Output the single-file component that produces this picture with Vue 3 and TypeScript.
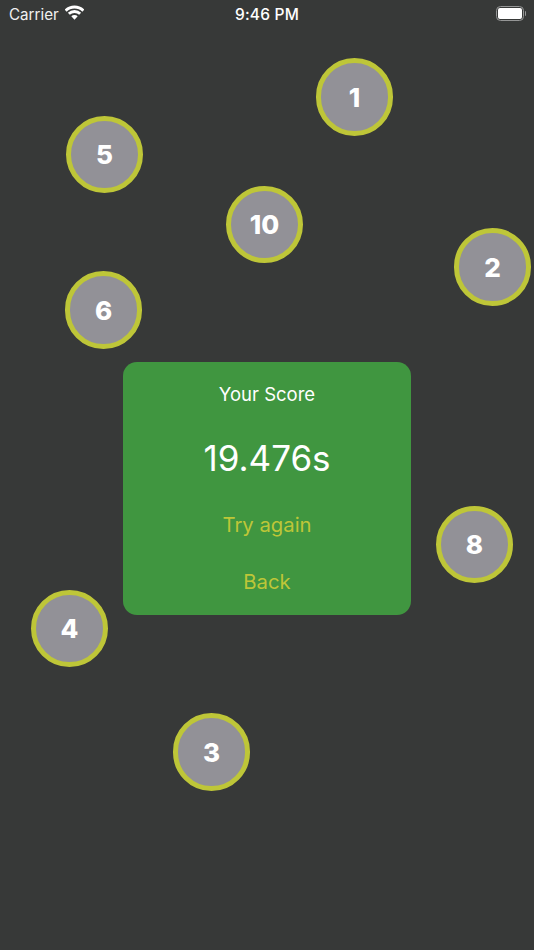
<script setup lang="ts">
interface Node { n: number; x: number; y: number }
const nodes: Node[] = [
  { n: 1, x: 354.5, y: 97 },
  { n: 5, x: 104.5, y: 154.5 },
  { n: 10, x: 264.5, y: 224.5 },
  { n: 2, x: 492.5, y: 267 },
  { n: 6, x: 103.5, y: 310 },
  { n: 8, x: 474.5, y: 544.5 },
  { n: 4, x: 69.5, y: 628.5 },
  { n: 3, x: 211.5, y: 752 },
]
</script>

<template>
  <div class="screen">
    <header class="status">
      <div class="left">
        <span>Carrier</span>
        <svg class="wifi" width="19" height="15" viewBox="0 0 19 15">
          <path fill="none" stroke="#fff" stroke-width="2.8" d="M.66 5.66A12.500 12.500 0 0 1 18.340 5.660" />
          <path fill="none" stroke="#fff" stroke-width="2.8" d="M3.840 8.840A8 8 0 0 1 15.160 8.840" />
          <path fill="#fff" d="M9.500 14.800L6.300 11.300A4.500 4.500 0 0 1 12.700 11.300Z" />
        </svg>
      </div>
      <div class="time">9:46 PM</div>
      <div class="right">
        <div class="battery"><div class="level"></div></div>
        <div class="cap"></div>
      </div>
    </header>

    <div
      v-for="node in nodes"
      :key="node.n"
      class="node"
      :style="{ left: node.x + 'px', top: node.y + 'px' }"
    >{{ node.n }}</div>

    <main class="card">
      <div class="title">Your Score</div>
      <div class="score">19.476s</div>
      <div class="action try">Try again</div>
      <div class="action back">Back</div>
    </main>
  </div>
</template>

<style>
html, body { margin: 0; background: #373938; }
</style>

<style scoped>
.screen {
  position: relative;
  width: 534px;
  height: 950px;
  overflow: hidden;
  background: #373938;
  font-family: Inter, "Liberation Sans", sans-serif;
}
.status {
  height: 28px;
  display: grid;
  grid-template-columns: 1fr auto 1fr;
  align-items: center;
  color: #fff;
  font-size: 15.5px;
}
.left {
  display: flex;
  align-items: center;
  gap: 6px;
  padding-left: 9px;
  color: #f0f0f0;
  font-size: 15.2px;
}
.wifi { margin-top: -3px; }
.time { font-weight: 500; letter-spacing: .2px; }
.right {
  display: flex;
  align-items: center;
  justify-content: flex-end;
  padding-right: 8px;
  margin-top: -1px;
  gap: 1px;
}
.battery {
  box-sizing: border-box;
  width: 28px;
  height: 15px;
  padding: 1px;
  border: 1.500px solid #959696;
  border-radius: 4.500px;
}
.level {
  width: 100%;
  height: 100%;
  background: #fff;
  border-radius: 2px;
}
.cap {
  width: 1.500px;
  height: 5px;
  background: #959696;
  border-radius: 0 1px 1px 0;
}
.node {
  position: absolute;
  box-sizing: border-box;
  width: 77.500px;
  height: 77.500px;
  margin: -38.750px 0 0 -38.750px;
  display: flex;
  align-items: center;
  justify-content: center;
  border: 5.500px solid #bec638;
  border-radius: 50%;
  background: #929197;
  color: #fff;
  font-size: 26px;
  font-weight: 800;
}
.card {
  position: absolute;
  left: 123px;
  top: 362px;
  box-sizing: border-box;
  width: 288px;
  height: 253px;
  border-radius: 14px;
  background: #409640;
  display: flex;
  flex-direction: column;
  align-items: center;
  text-align: center;
}
.title {
  margin-top: 20px;
  height: 24px;
  line-height: 24px;
  font-size: 18.500px;
  color: #fff;
}
.score {
  margin-top: 29px;
  height: 46px;
  line-height: 46px;
  font-size: 35px;
  color: #fff;
}
.action {
  font-size: 20.300px;
  line-height: 26px;
  height: 26px;
  color: #bec638;
}
.try { margin-top: 31px; }
.back { margin-top: 31px; }
</style>
